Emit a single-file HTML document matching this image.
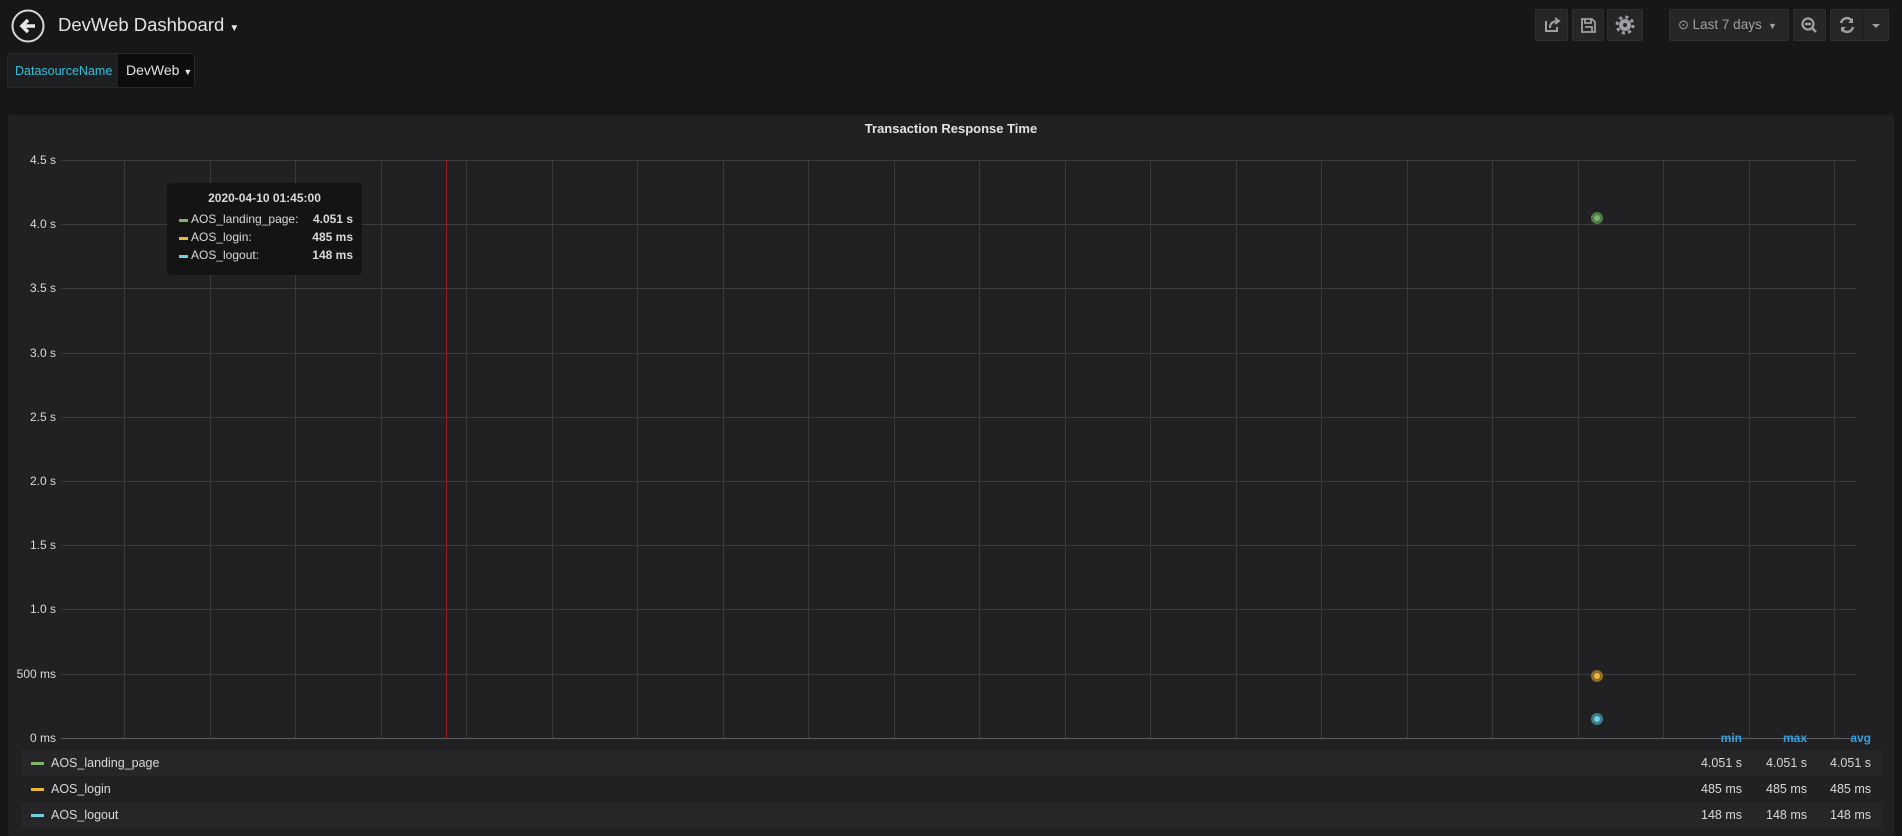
<!DOCTYPE html><html><head><meta charset="utf-8"><style>
*{margin:0;padding:0;box-sizing:border-box}
body{width:1902px;height:836px;background:#161719;font-family:"Liberation Sans",sans-serif;color:#d8d9da;position:relative;overflow:hidden}
.a{position:absolute}
.btn{position:absolute;top:9px;height:32px;background:#262628;border:1px solid #2f2f32;border-radius:2px;color:#9fa0a3}
.yl{position:absolute;left:10px;width:46px;text-align:right;font-size:12px;color:#d8d9da}
.hl{position:absolute;left:61px;width:1795px;height:1px;background:#3b3b3e}
.vl{position:absolute;top:160px;height:578px;width:1px;background:#3b3b3e}
.row{position:absolute;left:21px;width:1860px;height:26px;font-size:12.5px;line-height:26px}
.sw{position:absolute;left:10px;top:12px;width:13px;height:3px}
.v{position:absolute;width:70px;text-align:right}
</style></head><body>
<svg class="a" style="left:11px;top:9px" width="35" height="35"><circle cx="17" cy="17" r="15.5" fill="none" stroke="#d8d9da" stroke-width="2"/><path d="M24 17H11.5M17 11L11 17L17 23" stroke="#e8e8e8" stroke-width="3.5" fill="none"/></svg>
<div class="a" style="left:58px;top:14px;font-size:18.5px;color:#e3e3e3">DevWeb Dashboard <span style="font-size:10px">▼</span></div>
<div class="a" style="left:7px;top:53px;width:188px;height:35px;background:#1f1f22;border:1px solid #2a2a2d;border-radius:3px"></div>
<div class="a" style="left:15px;top:64px;font-size:12.5px;color:#31c0d8">DatasourceName</div>
<div class="a" style="left:118px;top:54px;width:76px;height:33px;background:#0b0c0e;font-size:14px;line-height:33px;padding-left:8px;color:#e3e3e3">DevWeb <span style="font-size:9px">▼</span></div>
<div class="btn" style="left:1535px;width:33px"><svg width="31" height="30"><path d="M10 11v10h11v-4M14 18c0-5 3-7 8-7M19 8l4 3-4 3" stroke="#9fa0a3" stroke-width="2" fill="none"/></svg></div>
<div class="btn" style="left:1572px;width:32px"><svg width="30" height="30"><path d="M9 9h10l3 3v10H9z M12 9v4h6V9 M12 17h7v5" stroke="#9fa0a3" stroke-width="1.8" fill="none"/></svg></div>
<div class="btn" style="left:1607px;width:36px"><svg width="34" height="30"><circle cx="17" cy="15" r="6" fill="#9fa0a3"/><circle cx="17" cy="15" r="8" fill="none" stroke="#9fa0a3" stroke-width="3" stroke-dasharray="3 3.3"/><circle cx="17" cy="15" r="2" fill="#262628"/></svg></div>
<div class="btn" style="left:1669px;width:120px;font-size:13.5px;line-height:30px;padding-left:8px"><span style="font-size:13px">⊙</span> Last 7 days <span style="font-size:9px">&nbsp;▼</span></div>
<div class="btn" style="left:1793px;width:33px"><svg width="31" height="30"><circle cx="14" cy="14" r="5.5" stroke="#9fa0a3" stroke-width="2.2" fill="none"/><path d="M11 14h6M18 18l4 4" stroke="#9fa0a3" stroke-width="2.5"/></svg></div>
<div class="btn" style="left:1830px;width:59px"><svg width="58" height="30"><path d="M10 13a6 6 0 0 1 11-2M22 17a6 6 0 0 1-11 2" stroke="#9fa0a3" stroke-width="2.5" fill="none"/><path d="M22 8v5h-5zM10 22v-5h5z" fill="#9fa0a3"/><path d="M32 0v30" stroke="#1f1f22"/><path d="M41 14h8l-4 4z" fill="#9fa0a3"/></svg></div>
<div class="a" style="left:8px;top:115px;width:1886px;height:721px;background:#212124;border-radius:3px"></div>
<div class="a" style="left:8px;top:121px;width:1886px;text-align:center;font-size:13px;font-weight:bold;color:#e3e3e3">Transaction Response Time</div>
<div class="hl" style="top:160px"></div><div class="hl" style="top:224px"></div><div class="hl" style="top:288px"></div><div class="hl" style="top:353px"></div><div class="hl" style="top:417px"></div><div class="hl" style="top:481px"></div><div class="hl" style="top:545px"></div><div class="hl" style="top:609px"></div><div class="hl" style="top:674px"></div><div class="hl" style="top:738px;background:#5a5a5d"></div>
<div class="yl" style="top:153px">4.5 s</div><div class="yl" style="top:217px">4.0 s</div><div class="yl" style="top:281px">3.5 s</div><div class="yl" style="top:346px">3.0 s</div><div class="yl" style="top:410px">2.5 s</div><div class="yl" style="top:474px">2.0 s</div><div class="yl" style="top:538px">1.5 s</div><div class="yl" style="top:602px">1.0 s</div><div class="yl" style="top:667px">500 ms</div><div class="yl" style="top:731px">0 ms</div>
<div id="vls"></div>
<script>
var h='';for(var k=0;k<21;k++){h+='<div class="vl" style="left:'+Math.round(124+85.5*k)+'px"></div>';}
document.getElementById('vls').innerHTML=h;
</script>
<div class="a" style="left:446px;top:160px;width:1px;height:578px;background:#a81a1a"></div>
<div class="a" style="left:1591px;top:212px;width:12px;height:12px;border-radius:50%;background:#4f7a4a"></div><div class="a" style="left:1594px;top:215px;width:6px;height:6px;border-radius:50%;background:#7eb26d"></div>
<div class="a" style="left:1591px;top:670px;width:12px;height:12px;border-radius:50%;background:#8a6d2a"></div><div class="a" style="left:1594px;top:673px;width:6px;height:6px;border-radius:50%;background:#eab839"></div>
<div class="a" style="left:1591px;top:713px;width:12px;height:12px;border-radius:50%;background:#3f7d86"></div><div class="a" style="left:1594px;top:716px;width:6px;height:6px;border-radius:50%;background:#6ed0e0"></div>
<div class="a" style="left:167px;top:183px;width:195px;height:92px;background:#141414;border-radius:4px;font-size:12px;color:#d8d9da">
<div style="text-align:center;font-weight:bold;margin-top:8px">2020-04-10 01:45:00</div>
<div style="position:absolute;top:36px;left:12px;width:9px;height:3px;background:#7eb26d"></div><div style="position:absolute;top:29px;left:24px">AOS_landing_page:</div><div style="position:absolute;top:29px;right:9px;font-weight:bold">4.051 s</div>
<div style="position:absolute;top:54px;left:12px;width:9px;height:3px;background:#eab839"></div><div style="position:absolute;top:47px;left:24px">AOS_login:</div><div style="position:absolute;top:47px;right:9px;font-weight:bold">485 ms</div>
<div style="position:absolute;top:72px;left:12px;width:9px;height:3px;background:#6ed0e0"></div><div style="position:absolute;top:65px;left:24px">AOS_logout:</div><div style="position:absolute;top:65px;right:9px;font-weight:bold">148 ms</div>
</div>
<div class="a" style="left:1672px;top:731px;width:70px;text-align:right;font-size:12px;font-weight:bold;color:#33a2e5">min</div>
<div class="a" style="left:1737px;top:731px;width:70px;text-align:right;font-size:12px;font-weight:bold;color:#33a2e5">max</div>
<div class="a" style="left:1801px;top:731px;width:70px;text-align:right;font-size:12px;font-weight:bold;color:#33a2e5">avg</div>
<div class="row" style="top:750px;background:#262628"><div class="sw" style="background:#7eb26d"></div><span style="position:absolute;left:30px">AOS_landing_page</span><span class="v" style="left:1651px">4.051 s</span><span class="v" style="left:1716px">4.051 s</span><span class="v" style="left:1780px">4.051 s</span></div>
<div class="row" style="top:776px;background:#212124"><div class="sw" style="background:#eab839"></div><span style="position:absolute;left:30px">AOS_login</span><span class="v" style="left:1651px">485 ms</span><span class="v" style="left:1716px">485 ms</span><span class="v" style="left:1780px">485 ms</span></div>
<div class="row" style="top:802px;background:#262628"><div class="sw" style="background:#6ed0e0"></div><span style="position:absolute;left:30px">AOS_logout</span><span class="v" style="left:1651px">148 ms</span><span class="v" style="left:1716px">148 ms</span><span class="v" style="left:1780px">148 ms</span></div>
</body></html>
